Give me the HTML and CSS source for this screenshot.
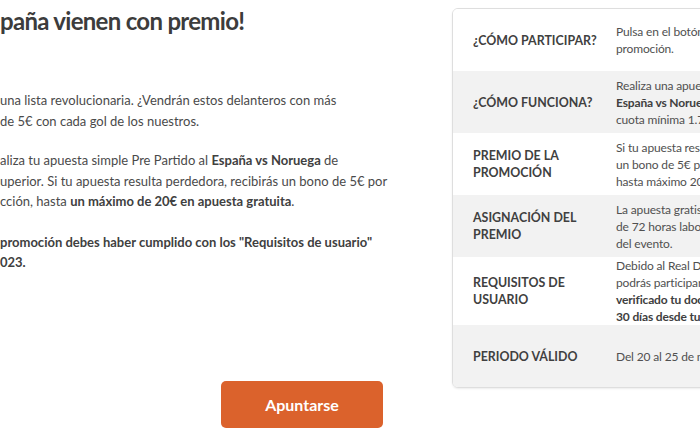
FILE: index.html
```html
<!DOCTYPE html>
<html lang="es">
<head>
<meta charset="utf-8">
<link rel="stylesheet" href="styles.css">
</head>
<body>
<div class="page">
  <div class="left">
    <h1 class="title">paña vienen con premio!</h1>
    <div class="para p1">
      <div class="line">una lista revolucionaria. ¿Vendrán estos delanteros con más</div>
      <div class="line">de 5€ con cada gol de los nuestros.</div>
    </div>
    <div class="para p2">
      <div class="line">aliza tu apuesta simple Pre Partido al <b>España vs Noruega</b> de</div>
      <div class="line">uperior. Si tu apuesta resulta perdedora, recibirás un bono de 5€ por</div>
      <div class="line">cción, hasta <b>un máximo de 20€ en apuesta gratuita</b>.</div>
    </div>
    <div class="para p3">
      <div class="line"><b>promoción debes haber cumplido con los "Requisitos de usuario"</b></div>
      <div class="line"><b>023.</b></div>
    </div>
    <div class="btn-row"><a class="btn">Apuntarse</a></div>
  </div>
  <div class="card">
    <div class="row">
      <div class="label">¿CÓMO PARTICIPAR?</div>
      <div class="value">Pulsa en el botón "Apuntarse" para participar en la<br>promoción.</div>
    </div>
    <div class="row alt">
      <div class="label">¿CÓMO FUNCIONA?</div>
      <div class="value">Realiza una apuesta simple Pre Partido al<br><b>España vs Noruega</b> de Ganador del partido con<br>cuota mínima 1.75 o superior.</div>
    </div>
    <div class="row">
      <div class="label">PREMIO DE LA<br>PROMOCIÓN</div>
      <div class="value">Si tu apuesta resulta perdedora, recibirás<br>un bono de 5€ por cada gol de la selección,<br>hasta máximo 20€ en apuesta gratuita.</div>
    </div>
    <div class="row alt">
      <div class="label">ASIGNACIÓN DEL<br>PREMIO</div>
      <div class="value">La apuesta gratis se asignará en un plazo<br>de 72 horas laborables tras la finalización<br>del evento.</div>
    </div>
    <div class="row tall">
      <div class="label">REQUISITOS DE<br>USUARIO</div>
      <div class="value">Debido al Real Decreto de Comunicaciones,<br>podrás participar si en el momento has<br><b>verificado tu documentación y tienes más de</b><br><b>30 días desde tu registro.</b></div>
    </div>
    <div class="row alt">
      <div class="label">PERIODO VÁLIDO</div>
      <div class="value">Del 20 al 25 de marzo de 2023.</div>
    </div>
  </div>
</div>
</body>
</html>
```

FILE: styles.css
```css
html, body {
  margin: 0;
  padding: 0;
  background: #ffffff;
  overflow: hidden;
}
body {
  width: 700px;
  height: 441px;
  font-family: Lato, "Open Sans", sans-serif;
  color: #4a4a4a;
}
.page {
  display: flex;
  align-items: flex-start;
  width: 1200px;
}
.left {
  width: 452px;
  flex: none;
}
.title {
  margin: 0;
  padding-top: 4px;
  font-size: 24px;
  line-height: 34px;
  font-weight: 700;
  letter-spacing: -0.7px;
  color: #3c3c3c;
  white-space: nowrap;
}
.para {
  font-size: 13px;
  line-height: 20.5px;
}
.line {
  white-space: nowrap;
}
.para b {
  font-weight: 700;
  color: #404040;
}
.p1 { margin-top: 52px; }
.p2 { margin-top: 19px; }
.p3 { margin-top: 20px; }
.btn-row {
  padding-left: 221px;
  margin-top: 108px;
}
.btn {
  display: flex;
  align-items: center;
  justify-content: center;
  width: 162px;
  height: 47px;
  background: #db622c;
  border-radius: 5px;
  color: #ffffff;
  font-size: 16px;
  font-weight: 700;
}
.card {
  flex: none;
  margin-top: 8px;
  width: 500px;
  border: 1px solid #dedede;
  border-radius: 6px;
  overflow: hidden;
  box-shadow: 0 1px 2px rgba(0,0,0,0.08);
}
.row {
  display: flex;
  align-items: center;
  min-height: 62px;
  background: #ffffff;
}
.row.alt { background: #f2f2f2; }
.row.tall { min-height: 68px; }
.label {
  width: 133px;
  padding-left: 20px;
  padding-right: 10px;
  flex: none;
  font-size: 12.4px;
  line-height: 17px;
  font-weight: 700;
  color: #404040;
  white-space: nowrap;
}
.value {
  font-size: 12px;
  line-height: 17px;
  letter-spacing: -0.15px;
  white-space: nowrap;
  color: #505050;
}
.value b { font-weight: 700; color: #404040; }
```
